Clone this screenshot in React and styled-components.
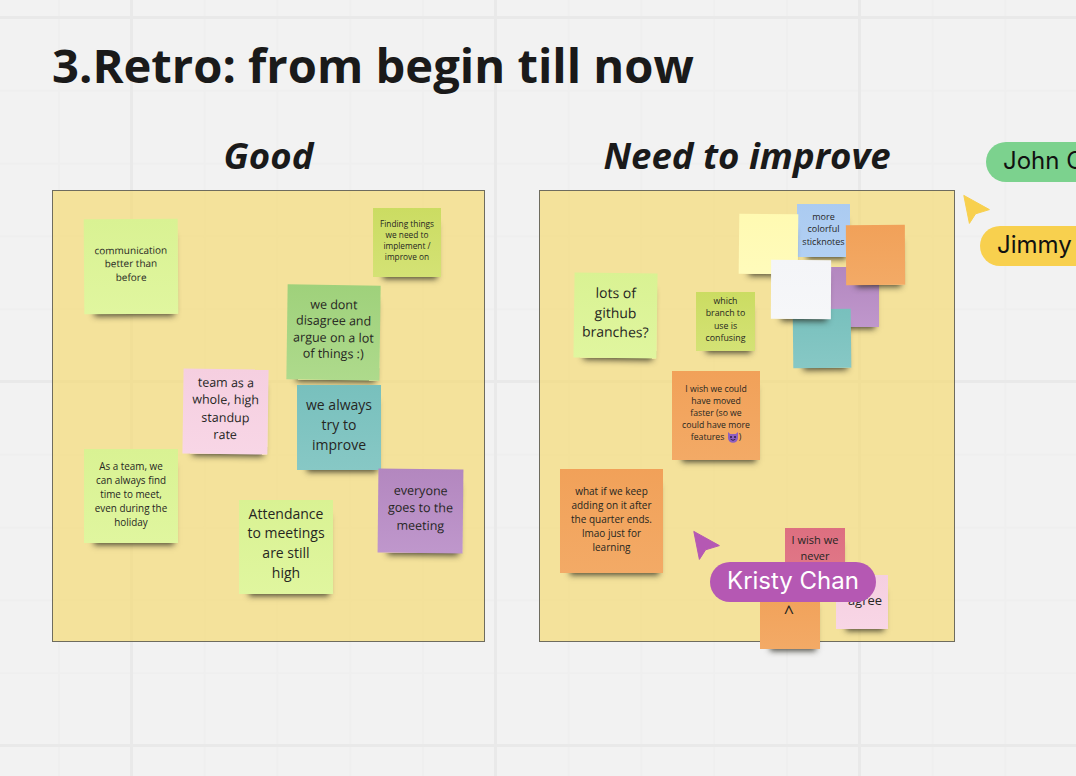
import React from 'react';
import styled, { createGlobalStyle } from 'styled-components';

const Global = createGlobalStyle`
  html, body { margin: 0; padding: 0; width: 1076px; height: 776px; overflow: hidden; background: #f2f2f2; }
  * { box-sizing: border-box; }
`;

const Canvas = styled.main`
  position: relative;
  width: 1076px;
  height: 776px;
  overflow: hidden;
  padding: 33px 0 0 52px;
  font-family: "Open Sans", sans-serif;
  color: #1a1a1a;
  background-color: #f2f2f2;
  background-image:
    linear-gradient(#e9e9e9 3px, transparent 3px),
    linear-gradient(90deg, #e9e9e9 3px, transparent 3px),
    linear-gradient(#efefef 2px, transparent 2px),
    linear-gradient(90deg, #efefef 2px, transparent 2px);
  background-size: 100% 364px, 364px 100%, 100% 72.8px, 72.8px 100%;
  background-position: 0 16px, 130px 0, 0 17px, 58px 0;
`;

const Title = styled.h1`
  margin: 0 0 33px;
  font-size: 47.15px;
  line-height: 64px;
  font-weight: 700;
  white-space: nowrap;
`;

const Board = styled.div`
  display: grid;
  grid-template-columns: 433px 416px;
  column-gap: 54px;
`;

const Column = styled.section`
  display: flex;
  flex-direction: column;
  gap: 10px;
`;

const Heading = styled.h2`
  margin: 0;
  font-size: 36.6px;
  line-height: 50px;
  font-weight: 700;
  font-style: italic;
  text-align: center;
  white-space: nowrap;
`;

const Frame = styled.div`
  position: relative;
  height: 452px;
  background: rgba(244, 220, 124, 0.74);
  border: 1px solid #6e6c5e;
`;

const palette = {
  lime: ['#d9f293', '#e0f69f'],
  olive: ['#cbdc62', '#d4e275'],
  green: ['#9fd17b', '#aeda8c'],
  pink: ['#f5cfe0', '#f8d6e6'],
  teal: ['#78c0bd', '#87c8c5'],
  purple: ['#b387bf', '#bf97cc'],
  orange: ['#f1a159', '#f3aa66'],
  yellow: ['#fffab2', '#fffbbb'],
  blue: ['#abcbf1', '#b2d0f3'],
  white: ['#f4f5f8', '#f6f7f9'],
  red: ['#dd6f80', '#e27b8b'],
};

const Note = styled.article`
  position: absolute;
  left: ${p => p.$x}px;
  top: ${p => p.$y}px;
  width: ${p => p.$w}px;
  height: ${p => p.$h}px;
  transform: rotate(${p => p.$r || 0}deg);
  display: flex;
  align-items: ${p => (p.$top ? 'flex-start' : 'center')};
  justify-content: center;
  padding: ${p => p.$pad || '0 4px 6px'};
  text-align: center;
  font-size: ${p => p.$fs}px;
  line-height: ${p => p.$lh}px;
  color: #26261f;
  background: linear-gradient(${p => palette[p.$c][0]}, ${p => palette[p.$c][1]});
  box-shadow: 3px 9px 6px -7px rgba(35, 35, 25, 0.8);
`;

const Label = styled.p`
  margin: 0;
  white-space: pre-line;
`;

const Pill = styled.div`
  position: absolute;
  left: ${p => p.$x}px;
  top: ${p => p.$y}px;
  height: 40px;
  padding: 0 17px 3px;
  border-radius: 20px;
  display: flex;
  align-items: center;
  font-family: Inter, sans-serif;
  font-weight: 400;
  font-size: 24px;
  white-space: nowrap;
  color: ${p => p.$fg};
  background: ${p => p.$bg};
`;

const Cursor = styled.svg`
  position: absolute;
  left: ${p => p.$x}px;
  top: ${p => p.$y}px;
  width: 29px;
  height: 32px;
`;

const EmojiIcon = styled.svg`
  display: inline-block;
  width: 12px;
  height: 12px;
  vertical-align: -3px;
`;

const Devil = () => (
  <EmojiIcon viewBox="0 0 12 12" aria-hidden="true">
    <path d="M1 1 L3.2 3 L8.8 3 L11 1 L11 7 A5 4.8 0 0 1 1 7 Z" fill="#8e5fc0" />
    <circle cx="4" cy="6" r="1" fill="#2b1a40" />
    <circle cx="8" cy="6" r="1" fill="#2b1a40" />
    <path d="M3.6 8.2 Q6 10.4 8.4 8.2" stroke="#2b1a40" strokeWidth="0.9" fill="none" />
  </EmojiIcon>
);

const goodNotes = [
  { x: 84, y: 219, w: 94, h: 95, c: 'lime', fs: 10, lh: 13.5, r: -0.4, t: 'communication\nbetter than\nbefore', pad: '0 2px 5px' },
  { x: 373, y: 208, w: 68, h: 69, c: 'olive', fs: 8.3, lh: 11, t: 'Finding things\nwe need to\nimplement /\nimprove on', pad: '0 2px 6px' },
  { x: 287, y: 285, w: 93, h: 95, c: 'green', fs: 12.5, lh: 16.5, r: 0.8, t: 'we dont\ndisagree and\nargue on a lot\nof things :)' },
  { x: 183, y: 369, w: 85, h: 85, c: 'pink', fs: 12.5, lh: 17.4, r: 0.8, t: 'team as a\nwhole, high\nstandup\nrate' },
  { x: 297, y: 385, w: 84, h: 85, c: 'teal', fs: 14, lh: 20, t: 'we always\ntry to\nimprove' },
  { x: 84, y: 449, w: 94, h: 94, c: 'lime', fs: 9.9, lh: 14, t: 'As a team, we\ncan always find\ntime to meet,\neven during the\nholiday', pad: '0 2px 4px' },
  { x: 239, y: 500, w: 94, h: 94, c: 'lime', fs: 14, lh: 19.6, t: 'Attendance\nto meetings\nare still\nhigh', pad: '0 2px 8px' },
  { x: 378, y: 469, w: 85, h: 84, c: 'purple', fs: 12.5, lh: 17.2, r: 0.6, t: 'everyone\ngoes to the\nmeeting' },
];

const improveNotes = [
  { x: 574, y: 273, w: 83, h: 85, c: 'lime', fs: 14, lh: 19.8, r: 0.8, t: 'lots of\ngithub\nbranches?' },
  { x: 696, y: 292, w: 59, h: 59, c: 'olive', fs: 8.8, lh: 12.4, t: 'which\nbranch to\nuse is\nconfusing', pad: '0 0 4px' },
  { x: 797, y: 204, w: 53, h: 53, c: 'blue', fs: 9, lh: 12.6, t: 'more\ncolorful\nsticknotes', pad: '0 0 2px' },
  { x: 820, y: 267, w: 59, h: 60, c: 'purple', fs: 8, lh: 11, t: '' },
  { x: 739, y: 214, w: 59, h: 60, c: 'yellow', fs: 8, lh: 11, r: 0.6, t: '' },
  { x: 846, y: 225, w: 59, h: 60, c: 'orange', fs: 8, lh: 11, r: -0.3, t: '' },
  { x: 793, y: 309, w: 58, h: 59, c: 'teal', fs: 8, lh: 11, r: -0.6, t: '' },
  { x: 771, y: 260, w: 60, h: 59, c: 'white', fs: 8, lh: 11, r: 0.3, t: '' },
  { x: 672, y: 371, w: 88, h: 89, c: 'orange', fs: 8.7, lh: 12, t: 'I wish we could\nhave  moved\nfaster (so we\ncould have more\nfeatures ', devil: true, pad: '0 2px 6px' },
  { x: 560, y: 469, w: 103, h: 104, c: 'orange', fs: 10, lh: 14, t: 'what if we keep\nadding on it after\nthe quarter ends.\nlmao just for\nlearning', pad: '0 2px 4px' },
  { x: 785, y: 528, w: 60, h: 60, c: 'red', fs: 11, lh: 16, t: 'I wish we\nnever', top: true, pad: '4px 0 0' },
  { x: 836, y: 575, w: 52, h: 54, c: 'pink', fs: 13, lh: 16, t: 'agree', pad: '0 0 4px 6px' },
  { x: 760, y: 590, w: 60, h: 59, c: 'orange', fs: 18, lh: 20, t: '^', pad: '0 2px 15px 0' },
];

const CURSOR_PATH = 'M1.8 2.4 L27.4 16.6 L13.6 20.8 L7.4 30.4 Z';

const Stickies = ({ notes, ox }) =>
  notes.map((n, i) => (
    <Note key={i} $x={n.x - ox} $y={n.y - 191} $w={n.w} $h={n.h} $c={n.c} $fs={n.fs} $lh={n.lh} $r={n.r} $top={n.top} $pad={n.pad}>
      <Label>{n.t}{n.devil && <Devil />}{n.devil && ')'}</Label>
    </Note>
  ));

const Pointer = ({ x, y, color }) => (
  <Cursor $x={x} $y={y} viewBox="0 0 29 32" aria-hidden="true">
    <path d={CURSOR_PATH} fill={color} stroke={color} strokeWidth="1" strokeLinejoin="round" />
  </Cursor>
);

export default function App() {
  return (
    <Canvas>
      <Global />
      <Title>3.Retro: from begin till now</Title>
      <Board>
        <Column>
          <Heading>Good</Heading>
          <Frame><Stickies notes={goodNotes} ox={53} /></Frame>
        </Column>
        <Column>
          <Heading>Need to improve</Heading>
          <Frame><Stickies notes={improveNotes} ox={540} /></Frame>
        </Column>
      </Board>
      <Pointer x={692} y={529} color="#b558b3" />
      <Pill $x={710} $y={562} $bg="#b558b3" $fg="#ffffff">Kristy Chan</Pill>
      <Pointer x={962} y={193} color="#f8d04e" />
      <Pill $x={986} $y={142} $bg="#7cd28e" $fg="#111111">John Chen</Pill>
      <Pill $x={980} $y={226} $bg="#f8d04e" $fg="#111111">Jimmy Wang</Pill>
    </Canvas>
  );
}
